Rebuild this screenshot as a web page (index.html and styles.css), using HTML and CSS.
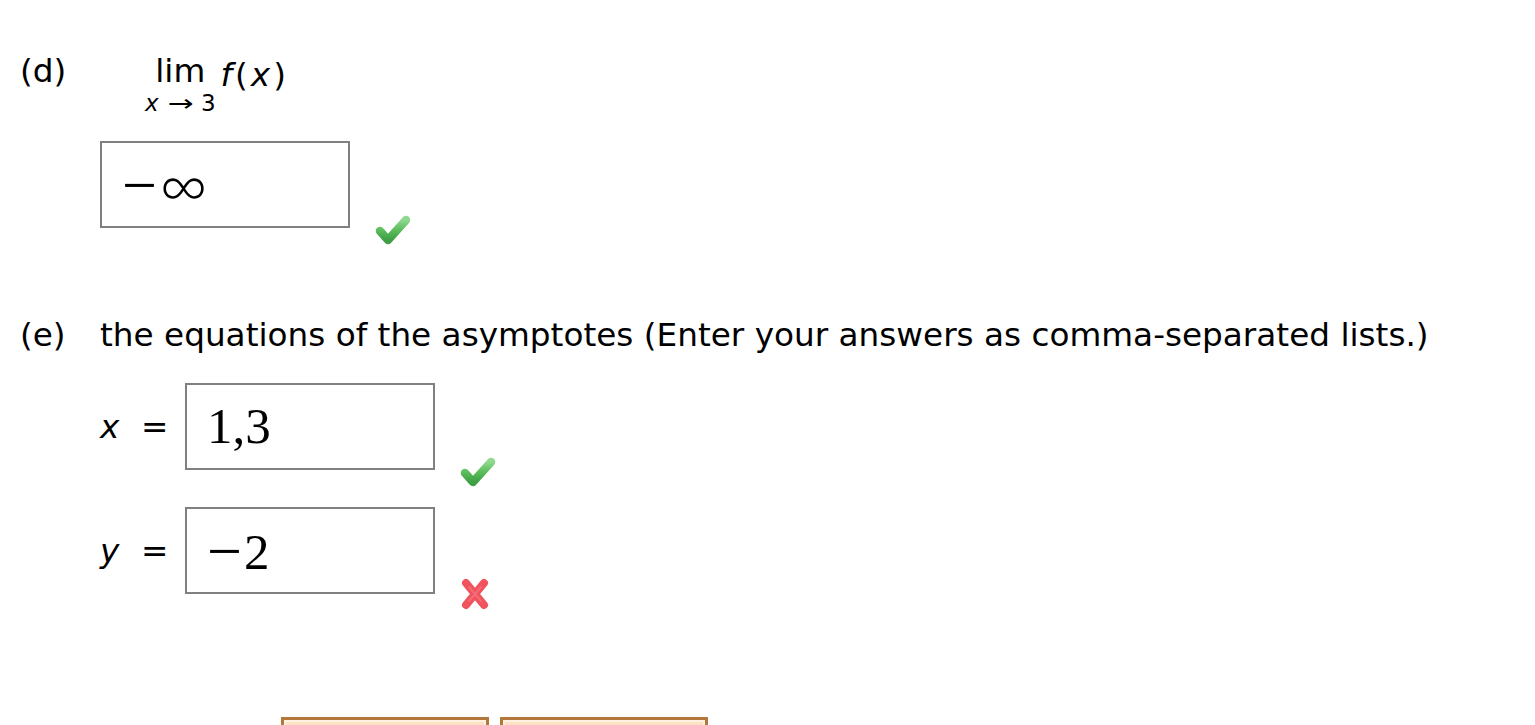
FILE: index.html
```html
<!DOCTYPE html>
<html lang="en">
<head>
<meta charset="utf-8">
<title>Limits and asymptotes</title>
<link rel="stylesheet" href="styles.css">
</head>
<body>
<main class="page">
  <section class="part part-d">
    <div class="part-head">
      <span class="label">(d)</span>
      <span class="limit">
        <span class="lim-word">lim</span>
        <span class="lim-sub"><i>x</i><span class="arrow">→</span>3</span>
      </span>
      <span class="fx"><i>f</i>(<i>x</i>)</span>
    </div>
    <div class="answer-row indent">
      <div class="ans-box"><span class="math"><span class="minus">−</span><span class="inf">∞</span></span></div>
      <svg class="mark check" viewBox="0 0 36 32" width="36" height="32" aria-label="correct">
        <defs>
          <linearGradient id="g1" x1="0" y1="0" x2="0" y2="1">
            <stop offset="0" stop-color="#8fd88f"/>
            <stop offset="0.5" stop-color="#5bbd5b"/>
            <stop offset="1" stop-color="#3f9f45"/>
          </linearGradient>
        </defs>
        <path d="M5 17 L13 26 L31 6" fill="none" stroke="url(#g1)" stroke-width="8.5" stroke-linecap="round" stroke-linejoin="round"/>
      </svg>
    </div>
  </section>

  <section class="part part-e">
    <div class="part-head">
      <span class="label">(e)</span>
      <span class="prompt">the equations of the asymptotes (Enter your answers as comma-separated lists.)</span>
    </div>
    <div class="answer-row indent first-row">
      <span class="var"><i>x</i></span>
      <span class="eq">=</span>
      <div class="ans-box"><span class="math">1,3</span></div>
      <svg class="mark check" viewBox="0 0 36 32" width="36" height="32" aria-label="correct">
        <defs>
          <linearGradient id="g2" x1="0" y1="0" x2="0" y2="1">
            <stop offset="0" stop-color="#8fd88f"/>
            <stop offset="0.5" stop-color="#5bbd5b"/>
            <stop offset="1" stop-color="#3f9f45"/>
          </linearGradient>
        </defs>
        <path d="M5 17 L13 26 L31 6" fill="none" stroke="url(#g2)" stroke-width="8.5" stroke-linecap="round" stroke-linejoin="round"/>
      </svg>
    </div>
    <div class="answer-row indent second-row">
      <span class="var"><i>y</i></span>
      <span class="eq">=</span>
      <div class="ans-box"><span class="math"><span class="minus">−</span>2</span></div>
      <svg class="mark cross" viewBox="0 0 30 36" width="30" height="36" aria-label="incorrect">
        <path d="M6 7 L24 29 M24 7 L6 29" fill="none" stroke="#f0535e" stroke-width="8" stroke-linecap="round"/>
        <path d="M9 11 L21 25 M21 11 L9 25" fill="none" stroke="#f77c84" stroke-width="2" stroke-linecap="round" opacity="0.6"/>
      </svg>
    </div>
  </section>

  <div class="buttons">
    <button class="btn" type="button"></button>
    <button class="btn" type="button"></button>
  </div>
</main>
</body>
</html>
```

FILE: styles.css
```css
html, body {
  margin: 0;
  padding: 0;
  background: #fff;
}
body {
  font-family: "DejaVu Sans", Verdana, sans-serif;
  font-size: 32.7px;
  color: #000;
  overflow: hidden;
}
.page {
  padding: 51px 0 0 20px;
}
.part-head {
  display: flex;
  align-items: flex-start;
  line-height: 40px;
}
.label {
  width: 80px;
  flex: none;
}
.limit {
  display: inline-flex;
  flex-direction: column;
  align-items: center;
  margin-left: 45px;
}
.lim-word {
  line-height: 38px;
  margin-top: 1px;
}
.lim-sub {
  font-size: 23px;
  line-height: 27px;
  white-space: nowrap;
}
.arrow {
  display: inline-block;
  transform: scaleX(1.35);
  margin: 0 11px 0 12px;
}
.fx {
  margin-left: 5px;
  margin-top: 4px;
  letter-spacing: 3px;
}
.indent {
  margin-left: 80px;
}
.answer-row {
  display: flex;
  align-items: center;
}
.part-d .answer-row {
  margin-top: 24px;
}
.ans-box {
  box-sizing: border-box;
  width: 250px;
  height: 87px;
  border: 2px solid #808080;
  display: flex;
  align-items: center;
  padding-left: 20px;
}
.math {
  font-family: "Liberation Serif", "Times New Roman", serif;
  font-size: 51px;
  line-height: 1;
}
.minus {
  font-size: 62px;
  vertical-align: -3px;
  margin-right: 2px;
}
.inf {
  font-family: "Lato", "Open Sans", "DejaVu Sans", sans-serif;
  font-weight: 300;
  font-size: 66px;
  line-height: 0;
  vertical-align: -5px;
}
.mark {
  flex: none;
  align-self: flex-end;
}
.check {
  margin-left: 25px;
  margin-bottom: -18px;
}
.cross {
  margin-left: 25px;
  margin-bottom: -18px;
}
.part-e {
  margin-top: 87px;
}
.first-row {
  margin-top: 28px;
}
.second-row {
  margin-top: 37px;
}
.var {
  width: 41px;
  flex: none;
}
.eq {
  width: 44px;
  flex: none;
}
.buttons {
  display: flex;
  gap: 11px;
  margin-top: 123px;
  margin-left: 261px;
}
.btn {
  width: 208px;
  height: 44px;
  margin: 0;
  border: 3px solid #b2773a;
  background: #fde1c3;
  box-shadow: inset 0 0 0 2px #fff0df;
  padding: 0;
}
```
